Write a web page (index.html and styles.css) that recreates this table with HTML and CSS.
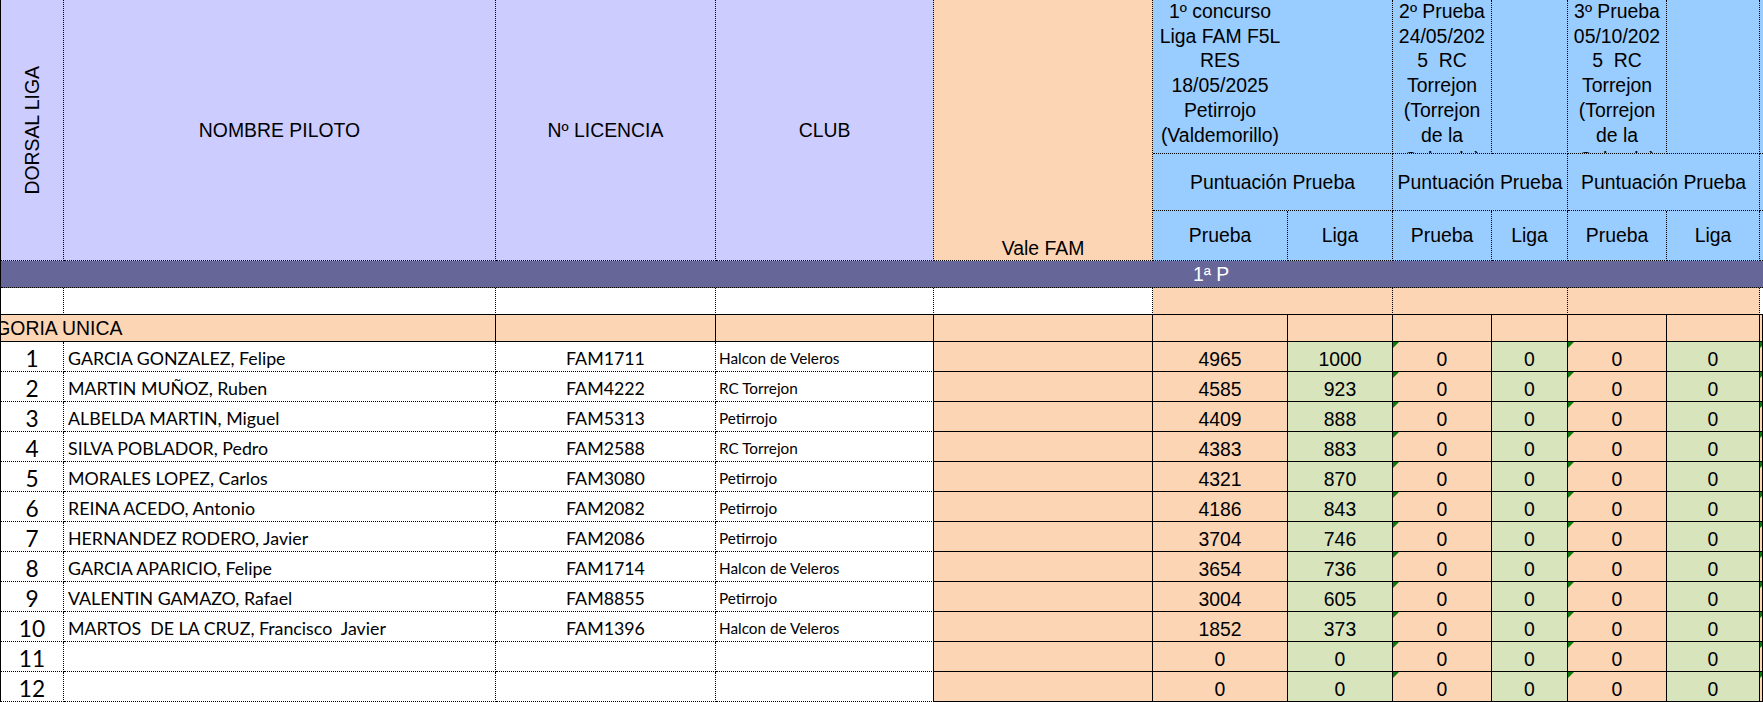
FILE: index.html
```html
<!DOCTYPE html>
<html lang="es">
<head>
<meta charset="utf-8">
<title>Liga FAM F5L RES</title>
<link rel="stylesheet" href="styles.css">
</head>
<body>
<div class="sheet">
  <!-- header row 1 -->
  <div class="c lav tall"><span class="vtext">DORSAL LIGA</span></div>
  <div class="c lav tall">NOMBRE PILOTO</div>
  <div class="c lav tall">Nº LICENCIA</div>
  <div class="c lav tall">CLUB</div>
  <div class="c peach tall vale">Vale FAM</div>
  <div class="c blue ev span2"><div class="evtext w1">1º concurso
Liga FAM F5L
RES
18/05/2025
Petirrojo
(Valdemorillo)</div></div>
  <div class="c blue ev"><div class="evtext">2º Prueba
24/05/202
5  RC
Torrejon
(Torrejon
de la
Calzada)</div></div>
  <div class="c blue ev"></div>
  <div class="c blue ev"><div class="evtext">3º Prueba
05/10/202
5  RC
Torrejon
(Torrejon
de la
Calzada)</div></div>
  <div class="c blue ev"></div>
  <div class="c blue edge"></div>
  <!-- header row 2 -->
  <div class="c blue span2">Puntuación Prueba</div>
  <div class="c blue span2">Puntuación Prueba</div>
  <div class="c blue span2">Puntuación Prueba</div>
  <div class="c blue edge"></div>
  <!-- header row 3 -->
  <div class="c blue">Prueba</div>
  <div class="c blue">Liga</div>
  <div class="c blue">Prueba</div>
  <div class="c blue">Liga</div>
  <div class="c blue">Prueba</div>
  <div class="c blue">Liga</div>
  <div class="c blue edge"></div>
  <!-- band -->
  <div class="band"><span>1ª P</span></div>
  <!-- blank row -->
  <div class="c w sb"></div>
  <div class="c w sb"></div>
  <div class="c w sb"></div>
  <div class="c w sb"></div>
  <div class="c w sb"></div>
  <div class="c peach sb span2"></div>
  <div class="c peach sb span2"></div>
  <div class="c peach sb span2"></div>
  <div class="c w sb edge"></div>
  <!-- category row -->
  <div class="c s peach span2 cat"><span>CATEGORIA UNICA</span></div>
  <div class="c s peach"></div>
  <div class="c s peach"></div>
  <div class="c s peach"></div>
  <div class="c s peach"></div>
  <div class="c s peach"></div>
  <div class="c s peach"></div>
  <div class="c s peach"></div>
  <div class="c s peach"></div>
  <div class="c s peach"></div>
  <div class="c s peach edge"></div>

  <!-- data rows -->
  <div class="c num">1</div><div class="c name">GARCIA GONZALEZ, Felipe</div><div class="c lic">FAM1711</div><div class="c club">Halcon de Veleros</div>
  <div class="c s peach"></div><div class="c s peach v">4965</div><div class="c s green v">1000</div><div class="c s peach v tri">0</div><div class="c s green v">0</div><div class="c s peach v tri">0</div><div class="c s green v">0</div><div class="c s peach tri edge"></div>

  <div class="c num">2</div><div class="c name">MARTIN MUÑOZ, Ruben</div><div class="c lic">FAM4222</div><div class="c club">RC Torrejon</div>
  <div class="c s peach"></div><div class="c s peach v">4585</div><div class="c s green v">923</div><div class="c s peach v tri">0</div><div class="c s green v">0</div><div class="c s peach v tri">0</div><div class="c s green v">0</div><div class="c s peach tri edge"></div>

  <div class="c num">3</div><div class="c name">ALBELDA MARTIN, Miguel</div><div class="c lic">FAM5313</div><div class="c club">Petirrojo</div>
  <div class="c s peach"></div><div class="c s peach v">4409</div><div class="c s green v">888</div><div class="c s peach v tri">0</div><div class="c s green v">0</div><div class="c s peach v tri">0</div><div class="c s green v">0</div><div class="c s peach tri edge"></div>

  <div class="c num">4</div><div class="c name">SILVA POBLADOR, Pedro</div><div class="c lic">FAM2588</div><div class="c club">RC Torrejon</div>
  <div class="c s peach"></div><div class="c s peach v">4383</div><div class="c s green v">883</div><div class="c s peach v tri">0</div><div class="c s green v">0</div><div class="c s peach v tri">0</div><div class="c s green v">0</div><div class="c s peach tri edge"></div>

  <div class="c num">5</div><div class="c name">MORALES LOPEZ, Carlos</div><div class="c lic">FAM3080</div><div class="c club">Petirrojo</div>
  <div class="c s peach"></div><div class="c s peach v">4321</div><div class="c s green v">870</div><div class="c s peach v tri">0</div><div class="c s green v">0</div><div class="c s peach v tri">0</div><div class="c s green v">0</div><div class="c s peach tri edge"></div>

  <div class="c num">6</div><div class="c name">REINA ACEDO, Antonio</div><div class="c lic">FAM2082</div><div class="c club">Petirrojo</div>
  <div class="c s peach"></div><div class="c s peach v">4186</div><div class="c s green v">843</div><div class="c s peach v tri">0</div><div class="c s green v">0</div><div class="c s peach v tri">0</div><div class="c s green v">0</div><div class="c s peach tri edge"></div>

  <div class="c num">7</div><div class="c name">HERNANDEZ RODERO, Javier</div><div class="c lic">FAM2086</div><div class="c club">Petirrojo</div>
  <div class="c s peach"></div><div class="c s peach v">3704</div><div class="c s green v">746</div><div class="c s peach v tri">0</div><div class="c s green v">0</div><div class="c s peach v tri">0</div><div class="c s green v">0</div><div class="c s peach tri edge"></div>

  <div class="c num">8</div><div class="c name">GARCIA APARICIO, Felipe</div><div class="c lic">FAM1714</div><div class="c club">Halcon de Veleros</div>
  <div class="c s peach"></div><div class="c s peach v">3654</div><div class="c s green v">736</div><div class="c s peach v tri">0</div><div class="c s green v">0</div><div class="c s peach v tri">0</div><div class="c s green v">0</div><div class="c s peach tri edge"></div>

  <div class="c num">9</div><div class="c name">VALENTIN GAMAZO, Rafael</div><div class="c lic">FAM8855</div><div class="c club">Petirrojo</div>
  <div class="c s peach"></div><div class="c s peach v">3004</div><div class="c s green v">605</div><div class="c s peach v tri">0</div><div class="c s green v">0</div><div class="c s peach v tri">0</div><div class="c s green v">0</div><div class="c s peach tri edge"></div>

  <div class="c num">10</div><div class="c name">MARTOS  DE LA CRUZ, Francisco  Javier</div><div class="c lic">FAM1396</div><div class="c club">Halcon de Veleros</div>
  <div class="c s peach"></div><div class="c s peach v">1852</div><div class="c s green v">373</div><div class="c s peach v tri">0</div><div class="c s green v">0</div><div class="c s peach v tri">0</div><div class="c s green v">0</div><div class="c s peach tri edge"></div>

  <div class="c num">11</div><div class="c name"></div><div class="c lic"></div><div class="c club"></div>
  <div class="c s peach"></div><div class="c s peach v">0</div><div class="c s green v">0</div><div class="c s peach v tri">0</div><div class="c s green v">0</div><div class="c s peach v tri">0</div><div class="c s green v">0</div><div class="c s peach tri edge"></div>

  <div class="c num">12</div><div class="c name"></div><div class="c lic"></div><div class="c club"></div>
  <div class="c s peach"></div><div class="c s peach v">0</div><div class="c s green v">0</div><div class="c s peach v tri">0</div><div class="c s green v">0</div><div class="c s peach v tri">0</div><div class="c s green v">0</div><div class="c s peach tri edge"></div>
</div>
</body>
</html>
```

FILE: styles.css
```css
* { box-sizing: border-box; margin: 0; padding: 0; }

html, body {
  width: 1763px;
  height: 702px;
  overflow: hidden;
  background: #ffffff;
}

body {
  font-family: "Liberation Sans", Arial, sans-serif;
  font-size: 19.4px;
  color: #000;
}

.sheet {
  display: grid;
  grid-template-columns: 63px 432px 220px 218px 219px 135px 105px 99px 76px 99px 93px 3px;
  grid-template-rows: 154px 57px 50px 27px 27px 27px repeat(12, 30px);
  border-left: 1px solid #000;
  width: 1763px;
}

.c {
  border-right: 1px dotted #000;
  border-bottom: 1px dotted #000;
  display: flex;
  align-items: center;
  justify-content: center;
  overflow: hidden;
  white-space: nowrap;
  position: relative;
}

.lav { background: #ccccff; }
.blue { background: #99ccff; }
.peach { background: #fcd5b4; }
.green { background: #d8e4bc; }
.w { background: #ffffff; }

.tall { grid-row: span 3; }
.span2 { grid-column: span 2; }

.vtext {
  writing-mode: vertical-rl;
  transform: rotate(180deg);
}

.vale {
  align-items: flex-end;
}

.ev {
  align-items: flex-start;
  justify-content: center;
}

.ev.span2 { justify-content: flex-start; }

.evtext {
  white-space: pre;
  text-align: center;
  line-height: 24.7px;
  margin-top: -1px;
}

.evtext.w1 { width: 134px; }

.edge { border-right: none; }

.band {
  grid-column: 1 / -1;
  background: #666699;
  border-bottom: 1px dotted #000;
  color: #ffffff;
  display: flex;
  align-items: center;
  padding-left: 1192px;
}

.sb { border-bottom: 1px solid #000; }

.s {
  border-right: 1px solid #000;
  border-bottom: 1px solid #000;
}

.cat {
  justify-content: flex-start;
}
.cat span { margin-left: -56px; }

.num, .name, .lic, .club {
  background: #ffffff;
  font-family: Lato, "Liberation Sans", sans-serif;
  padding-top: 3px;
}

.num { font-size: 22.7px; }

.name {
  font-size: 17.8px;
  justify-content: flex-start;
  padding-left: 4px;
  white-space: pre;
}

.lic { font-size: 17.8px; }

.club {
  font-size: 15.3px;
  justify-content: flex-start;
  padding-left: 3px;
  border-right: 1px solid #000;
}

.v { padding-top: 5px; }

.tri::before {
  content: "";
  position: absolute;
  left: 0;
  top: 0;
  border-top: 6px solid #0b7a0b;
  border-right: 6px solid transparent;
}
```
